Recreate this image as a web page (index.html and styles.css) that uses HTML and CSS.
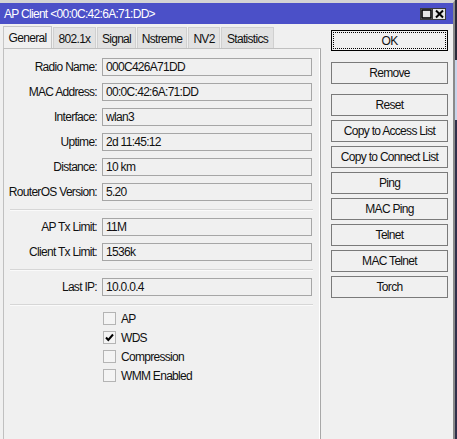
FILE: index.html
```html
<!DOCTYPE html>
<html>
<head>
<meta charset="utf-8">
<link rel="stylesheet" href="styles.css">
</head>
<body>
<div class="screen">
  <div class="window">
    <div class="titlebar">
      <span class="title">AP Client &lt;00:0C:42:6A:71:DD&gt;</span>
      <div class="tbtns">
        <span class="tbtn"><svg width="11" height="10" viewBox="0 0 11 10"><rect x="1" y="1" width="9" height="8" fill="none" stroke="#000" stroke-width="1.6"/></svg></span>
        <span class="tbtn"><svg width="11" height="10" viewBox="0 0 11 10"><path d="M2 1.5L9 8.5M9 1.5L2 8.5" stroke="#000" stroke-width="2"/></svg></span>
      </div>
    </div>
    <div class="content">
      <div class="left">
        <div class="tabs">
          <div class="tab active t1">General</div>
          <div class="tab t2">802.1x</div>
          <div class="tab t3">Signal</div>
          <div class="tab t4">Nstreme</div>
          <div class="tab t5">NV2</div>
          <div class="tab t6">Statistics</div>
        </div>
        <div class="panel">
          <div class="group">
            <div class="row"><label>Radio Name:</label><div class="field">000C426A71DD</div></div>
            <div class="row"><label>MAC Address:</label><div class="field">00:0C:42:6A:71:DD</div></div>
            <div class="row"><label>Interface:</label><div class="field">wlan3</div></div>
            <div class="row"><label>Uptime:</label><div class="field">2d 11:45:12</div></div>
            <div class="row"><label>Distance:</label><div class="field">10 km</div></div>
            <div class="row"><label>RouterOS Version:</label><div class="field">5.20</div></div>
          </div>
          <div class="sep"></div>
          <div class="group">
            <div class="row"><label>AP Tx Limit:</label><div class="field">11M</div></div>
            <div class="row"><label>Client Tx Limit:</label><div class="field">1536k</div></div>
          </div>
          <div class="sep"></div>
          <div class="group">
            <div class="row"><label>Last IP:</label><div class="field">10.0.0.4</div></div>
          </div>
          <div class="sep tight"></div>
          <div class="checks">
            <div class="check"><span class="box"></span>AP</div>
            <div class="check"><span class="box"><svg width="11" height="11" viewBox="0 0 11 11"><path d="M2 5.5L4.3 8L9 2.5" fill="none" stroke="#000" stroke-width="2"/></svg></span>WDS</div>
            <div class="check"><span class="box"></span>Compression</div>
            <div class="check"><span class="box"></span>WMM Enabled</div>
          </div>
        </div>
      </div>
      <div class="buttons">
        <div class="btn ok"><span class="focus">OK</span></div>
        <div class="btn remove">Remove</div>
        <div class="btn reset">Reset</div>
        <div class="btn">Copy to Access List</div>
        <div class="btn">Copy to Connect List</div>
        <div class="btn">Ping</div>
        <div class="btn">MAC Ping</div>
        <div class="btn">Telnet</div>
        <div class="btn">MAC Telnet</div>
        <div class="btn">Torch</div>
      </div>
    </div>
  </div>
  <div class="behind"></div>
</div>
</body>
</html>
```
FILE: styles.css
```css
* { box-sizing: border-box; }
html, body { margin: 0; padding: 0; }
body {
  width: 457px;
  height: 439px;
  overflow: hidden;
  font-family: "Liberation Sans", Arial, sans-serif;
  font-size: 12px;
  letter-spacing: -0.7px;
  color: #111;
  background: #f0f0f0;
}
.screen { display: flex; height: 439px; }
.window {
  width: 455px;
  height: 439px;
  background: #f0f0f0;
  border-top: 3px solid #d4d4d4;
  border-right: 2px solid #8a8a8a;
  display: flex;
  flex-direction: column;
}
.behind {
  width: 2px;
  background: linear-gradient(#2a2a3a 0, #2a2a3a 60px, #c8d4ea 60px, #c8d4ea 120px, #30304a 120px);
}
.titlebar {
  height: 21px;
  background: #4b50c8;
  display: flex;
  align-items: center;
  justify-content: space-between;
  padding-left: 4px;
  padding-right: 7px;
}
.title { color: #fff; font-size: 12px; letter-spacing: -0.7px; }
.tbtns { display: flex; gap: 0; margin-top: 1px; }
.tbtn {
  width: 13px; height: 12px;
  background: #e6e6e6;
  border: 1px solid #3a3a3a;
  display: flex; align-items: center; justify-content: center;
}
.tbtn + .tbtn { border-left: none; }
.content { display: flex; flex: 1; }
.left { width: 321px; padding-left: 3px; padding-top: 3px; display: flex; flex-direction: column; }
.tabs { display: flex; height: 21px; position: relative; z-index: 1; }
.tab {
  height: 21px;
  background: #e2e2e2;
  border: 1px solid #d0d0d0;
  border-bottom: none;
  display: flex; align-items: center; justify-content: center;
  padding-top: 1px;
}
.tab.active { background: #f0f0f0; border-color: #c6c6c6; height: 22px; margin-top: -1px; }
.tab + .tab { margin-left: 1px; }
.t1 { width: 49px; }
.t2 { width: 43px; }
.t3 { width: 39px; }
.t4 { width: 50px; }
.t5 { width: 32px; }
.t6 { width: 53px; }
.panel {
  flex: 1;
  border: 1px solid #c0c0c0;
  border-bottom: none;
  border-right: 1px solid #a8a8a8;
  padding: 9px 7px 0 0;
  box-shadow: inset -1px 0 0 #ffffff;
}
.group { display: flex; flex-direction: column; gap: 7px; }
.row { display: flex; align-items: center; height: 18px; }
.row label { width: 94px; text-align: right; padding-right: 1px; }
.field {
  margin-left: 4px;
  width: 210px;
  height: 18px;
  border: 1px solid #a6a6a6;
  background: #f0f0f0;
  padding-left: 3px;
  line-height: 16px;
}
.sep {
  margin: 8px 0 7px 6px;
  height: 2px;
  border-top: 1px solid #d6d6d6;
  border-bottom: 1px solid #fafafa;
}
.sep.tight { margin-bottom: 3px; }
.checks { display: flex; flex-direction: column; padding-left: 99px; }
.check { display: flex; align-items: center; height: 19px; }
.box {
  width: 13px; height: 13px;
  border: 1px solid #b4b4b4;
  background: #f4f4f4;
  margin-right: 5px;
  display: flex; align-items: center; justify-content: center;
}
.buttons { width: 117px; margin-left: 10px; padding-top: 6px; display: flex; flex-direction: column; gap: 4px; }
.btn {
  height: 22px;
  border: 1px solid #7a7a7a;
  background: #f0f0f0;
  display: flex; align-items: center; justify-content: center;
}
.btn.ok { height: 21px; border-color: #000; padding: 1px; }
.btn.ok .focus {
  width: 100%; height: 100%;
  border: 1px dotted #000;
  display: flex; align-items: center; justify-content: center;
}
.btn.remove { margin-top: 7px; }
.btn.reset { margin-top: 6px; }
```
